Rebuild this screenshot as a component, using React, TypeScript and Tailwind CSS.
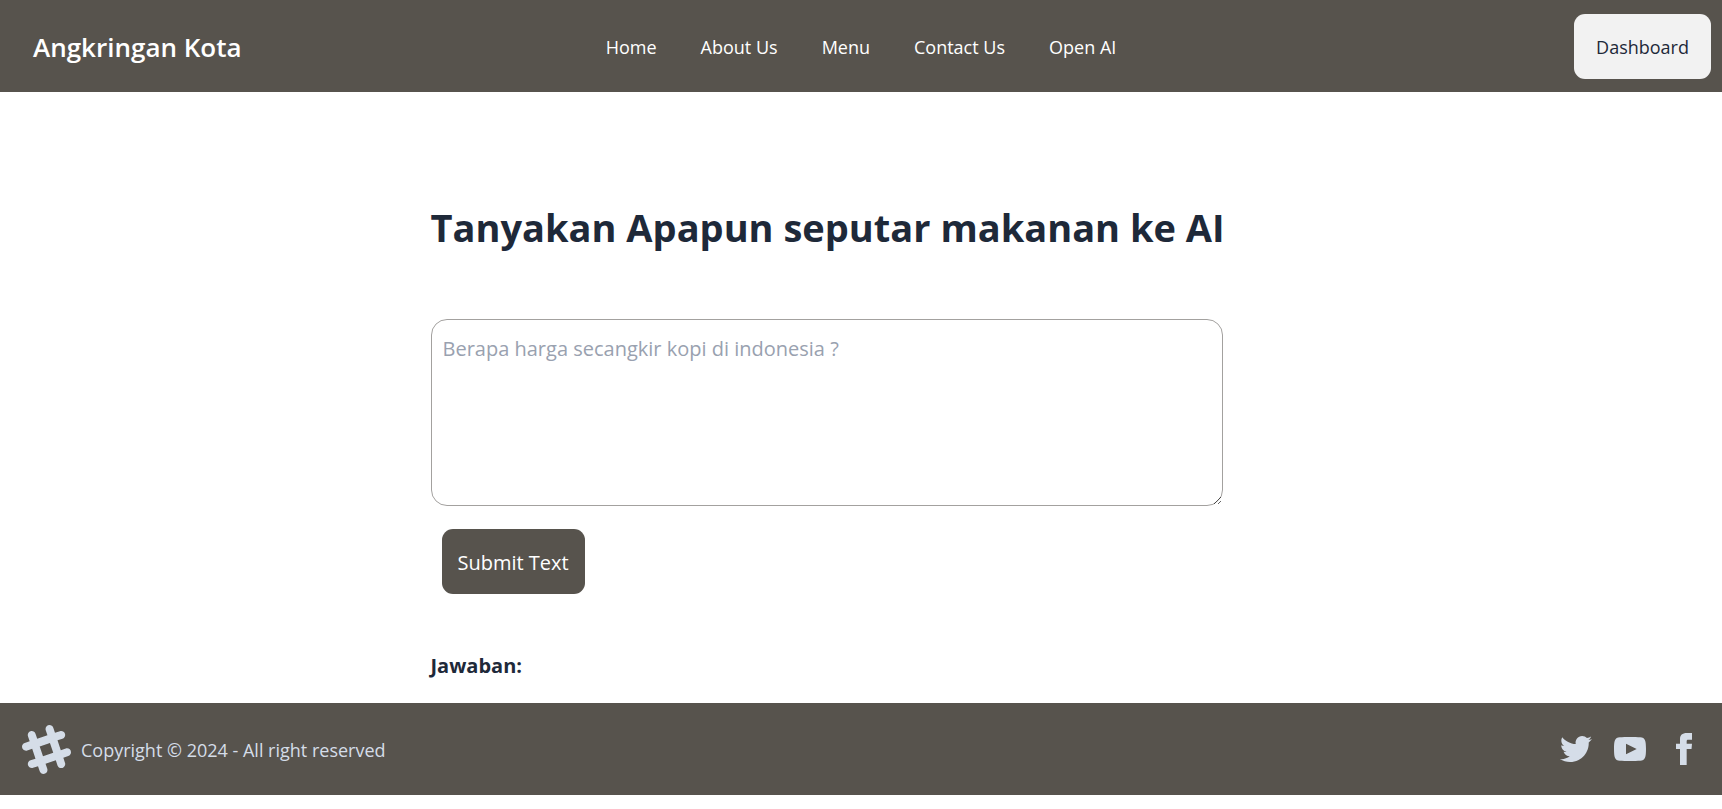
const links = ["Home", "About Us", "Menu", "Contact Us", "Open AI"];

const iconLink = "block text-[#d5dde8]";

export default function App() {
  return (
    <div className="bg-white font-['Open_Sans','Noto_Sans',sans-serif] text-gray-800">
      <header className="grid h-[92px] grid-cols-[1fr_auto_1fr] items-center bg-stone-600 px-[11px]">
        <a href="#" className="justify-self-start pt-0.5 pl-[22px] text-[26px] font-semibold text-white">
          Angkringan Kota
        </a>
        <nav className="pt-0.5">
          <ul className="flex gap-[44px] text-lg text-white">
            {links.map((label) => (
              <li key={label}>
                <a href="#">{label}</a>
              </li>
            ))}
          </ul>
        </nav>
        <button
          type="button"
          className="h-[65px] justify-self-end rounded-[11px] bg-[#f2f2f2] px-[22px] pt-0.5 text-lg font-medium"
        >
          Dashboard
        </button>
      </header>

      <main className="ml-[25%] w-[46%] pt-[107px]">
        <h1 className="text-[38px] leading-[56px] font-bold whitespace-nowrap">
          Tanyakan Apapun seputar makanan ke AI
        </h1>
        <form className="pt-16" onSubmit={(e) => e.preventDefault()}>
          <textarea
            aria-label="Pertanyaan"
            placeholder="Berapa harga secangkir kopi di indonesia ?"
            className="block h-[187px] w-full resize rounded-2xl border border-[#a3a19f] bg-white px-[11px] py-[13px] text-xl leading-[32px] placeholder:text-gray-400"
          />
          <button
            type="submit"
            className="mt-[23px] ml-[11px] h-[65px] rounded-[11px] bg-stone-600 px-4 pt-0.5 text-xl text-white"
          >
            Submit Text
          </button>
        </form>
        <h2 className="mt-[56px] mb-[21px] text-xl leading-[32px] font-bold">Jawaban:</h2>
      </main>

      <footer className="flex h-[92px] items-center justify-between bg-stone-600 px-[22px] text-[#d5dde8]">
        <div className="flex items-center gap-[10px]">
          <svg width="49" height="49" viewBox="0 0 24 24" fill="currentColor" fillRule="evenodd" clipRule="evenodd" aria-hidden="true">
            <path d="M22.672 15.226l-2.432.811.841 2.515c.33 1.019-.209 2.127-1.23 2.456-1.15.325-2.148-.321-2.463-1.226l-.84-2.518-5.013 1.677.84 2.517c.391 1.203-.434 2.542-1.831 2.542-.88 0-1.601-.564-1.86-1.314l-.842-2.516-2.431.809c-1.135.328-2.145-.317-2.463-1.229-.329-1.018.211-2.127 1.231-2.456l2.432-.809-1.621-4.823-2.432.808c-1.355.384-2.558-.59-2.558-1.839 0-.817.509-1.582 1.327-1.846l2.433-.809-.842-2.515c-.33-1.02.211-2.129 1.232-2.458 1.02-.329 2.13.209 2.461 1.229l.842 2.515 5.011-1.677-.839-2.517c-.403-1.238.484-2.553 1.843-2.553.819 0 1.585.509 1.85 1.326l.841 2.517 2.431-.81c1.02-.33 2.131.211 2.461 1.229.332 1.018-.21 2.126-1.23 2.456l-2.433.809 1.622 4.823 2.433-.809c1.242-.401 2.557.484 2.557 1.838 0 .819-.51 1.583-1.328 1.847m-8.992-6.428l-5.01 1.675 1.619 4.828 5.011-1.674-1.62-4.829z" />
          </svg>
          <p className="pt-0.5 text-lg">Copyright © 2024 - All right reserved</p>
        </div>
        <nav className="flex gap-[22px]">
          <a href="#" aria-label="Twitter" className={iconLink}>
            <svg width="32" height="32" viewBox="0 0 24 24" fill="currentColor">
              <path d="M24 4.557c-.883.392-1.832.656-2.828.775 1.017-.609 1.798-1.574 2.165-2.724-.951.564-2.005.974-3.127 1.195-.897-.957-2.178-1.555-3.594-1.555-3.179 0-5.515 2.966-4.797 6.045-4.091-.205-7.719-2.165-10.148-5.144-1.29 2.213-.669 5.108 1.523 6.574-.806-.026-1.566-.247-2.229-.616-.054 2.281 1.581 4.415 3.949 4.89-.693.188-1.452.232-2.224.084.626 1.956 2.444 3.379 4.6 3.419-2.07 1.623-4.678 2.348-7.29 2.04 2.179 1.397 4.768 2.212 7.548 2.212 9.142 0 14.307-7.721 13.995-14.646.962-.695 1.797-1.562 2.457-2.549z" />
            </svg>
          </a>
          <a href="#" aria-label="YouTube" className={iconLink}>
            <svg width="32" height="32" viewBox="0 0 24 24" fill="currentColor">
              <path d="M19.615 3.184c-3.604-.246-11.631-.245-15.23 0-3.897.266-4.356 2.62-4.385 8.816.029 6.185.484 8.549 4.385 8.816 3.6.245 11.626.246 15.23 0 3.897-.266 4.356-2.62 4.385-8.816-.029-6.185-.484-8.549-4.385-8.816zm-10.615 12.816v-8l8 3.993-8 4.007z" />
            </svg>
          </a>
          <a href="#" aria-label="Facebook" className={iconLink}>
            <svg width="32" height="32" viewBox="0 0 24 24" fill="currentColor">
              <path d="M9 8h-3v4h3v12h5v-12h3.642l.358-4h-4v-1.667c0-.955.192-1.333 1.115-1.333h2.885v-5h-3.808c-3.596 0-5.192 1.583-5.192 4.615v3.385z" />
            </svg>
          </a>
        </nav>
      </footer>
    </div>
  );
}
